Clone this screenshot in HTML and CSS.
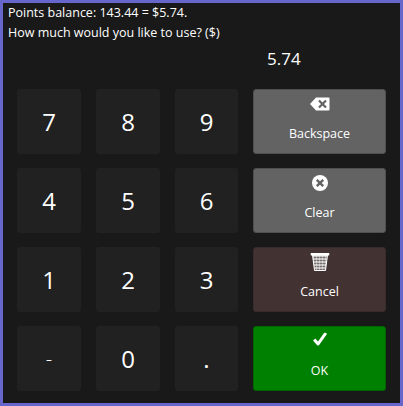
FILE: index.html
```html
<!DOCTYPE html>
<html>
<head>
    <title>Points Payment</title>
    <link rel="stylesheet" href="styles.css">
</head>
<body>
    <div class="window">
        <p class="message">Points balance: 143.44 = $5.74.</p>
        <p class="message">How much would you like to use? ($)</p>
        <div class="amount">5.74</div>
        <div class="keypad">
            <div class="key">7</div>
            <div class="key">8</div>
            <div class="key">9</div>
            <div class="action grey">
                <svg class="icon" width="20" height="14" viewBox="0 0 20 14">
                    <path fill="#fff" d="M6 0.500H18.500a1 1 0 0 1 1 1v11a1 1 0 0 1-1 1H6L0 7z"/>
                    <path stroke="#636363" stroke-width="2.200" d="M9 3.500l7 7M16 3.500l-7 7"/>
                </svg>
                <span>Backspace</span>
            </div>
            <div class="key">4</div>
            <div class="key">5</div>
            <div class="key">6</div>
            <div class="action grey">
                <svg class="icon" width="16" height="16" viewBox="0 0 16 16">
                    <circle fill="#fff" cx="8" cy="8" r="8"/>
                    <path stroke="#636363" stroke-width="2.400" d="M4.800 4.800l6.400 6.400M11.200 4.800l-6.400 6.400"/>
                </svg>
                <span>Clear</span>
            </div>
            <div class="key">1</div>
            <div class="key">2</div>
            <div class="key">3</div>
            <div class="action cancel">
                <svg class="icon" width="19" height="18" viewBox="0 0 19 18">
                    <defs>
                        <pattern id="mesh" width="3" height="3" patternUnits="userSpaceOnUse">
                            <rect width="3" height="3" fill="#e8e8e8"/>
                            <circle cx="1.500" cy="1.500" r="1" fill="#4a3a3a"/>
                        </pattern>
                    </defs>
                    <path fill="url(#mesh)" stroke="#fff" d="M2 2h15l-2 15.500H4z"/>
                    <path fill="#fff" d="M0 0h19v2.500H0z"/>
                </svg>
                <span>Cancel</span>
            </div>
            <div class="key minus">-</div>
            <div class="key">0</div>
            <div class="key">.</div>
            <div class="action ok">
                <svg class="icon check" width="14" height="13" viewBox="0 0 14 13">
                    <path fill="none" stroke="#fff" stroke-width="3" d="M1.200 7l3.800 4.500L12.800 0.500"/>
                </svg>
                <span>OK</span>
            </div>
        </div>
    </div>
</body>
</html>
```

FILE: styles.css
```css
html, body { margin: 0; padding: 0; }
body { font-family: "Open Sans", "Noto Sans", sans-serif; color: #fff; }
.window {
    box-sizing: border-box;
    width: 403px;
    height: 406px;
    border: 3px solid #6666cc;
    background: #191919;
    padding: 0 5px;
}
.message {
    margin: 0;
    font-size: 12.500px;
    line-height: 20px;
}
.amount {
    font-size: 17px;
    line-height: 22px;
    margin-left: 259px;
    padding-top: 5px;
    height: 41px;
}
.keypad {
    display: grid;
    grid-template-columns: 64px 64px 63px 133px;
    grid-auto-rows: 65px;
    column-gap: 15px;
    row-gap: 14px;
    margin-left: 9px;
}
.key, .action {
    box-sizing: border-box;
    border-radius: 3px;
    display: flex;
    flex-direction: column;
    align-items: center;
}
.key {
    background: #212121;
    justify-content: center;
    font-size: 24px;
}
.key.minus { font-size: 20px; font-weight: 300; }
.action {
    font-size: 12.500px;
    border: 1px solid transparent;
    height: 65px;
    position: relative;
}
.icon {
    position: absolute;
    top: 14px;
    left: 50%;
    transform: translate(-50%, -50%);
}
.icon.check { top: 12px; }
.action span { margin-top: 34px; line-height: 20px; }
.grey { background: #636363; border-color: #4f4f4f; }
.cancel { background: #433232; border-color: #3a2c2c; }
.ok { background: #008000; border-color: #006400; }
```
